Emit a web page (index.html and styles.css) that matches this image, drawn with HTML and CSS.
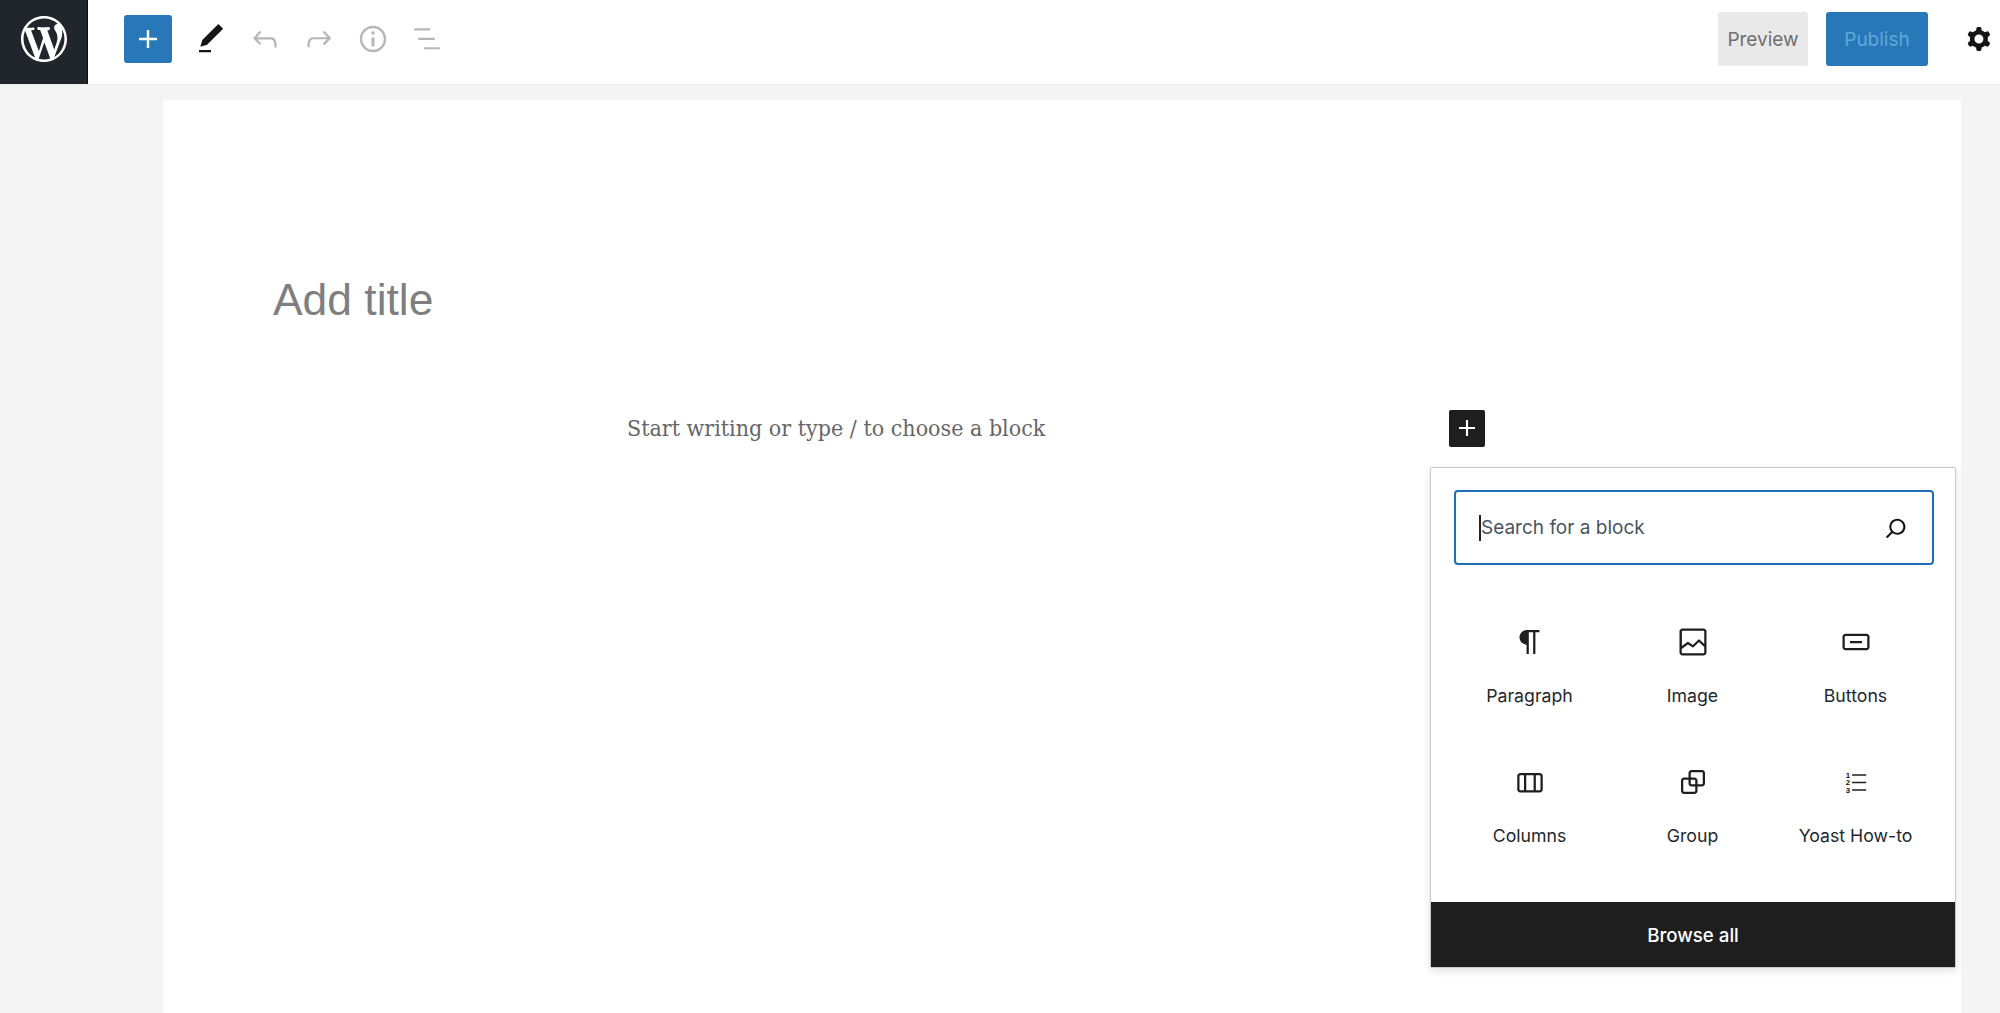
FILE: index.html
```html
<!DOCTYPE html>
<html lang="en">
<head>
<meta charset="utf-8">
<title>Add title</title>
<link rel="stylesheet" href="styles.css">
</head>
<body>
<header class="topbar">
  <div class="logo">
    <svg class="logo-svg" viewBox="0 0 20 20"><path d="M20 10c0-5.51-4.49-10-10-10C4.48 0 0 4.49 0 10c0 5.52 4.48 10 10 10 5.51 0 10-4.48 10-10zM7.78 15.37L4.37 6.22c.55-.02 1.17-.08 1.17-.08.5-.06.44-1.13-.06-1.11 0 0-1.45.11-2.37.11-.18 0-.37 0-.58-.01C4.12 2.69 6.87 1.11 10 1.11c2.33 0 4.45.87 6.05 2.34-.68-.11-1.65.39-1.65 1.58 0 .74.45 1.36.9 2.1.35.61.55 1.36.55 2.46 0 1.49-1.4 5-1.4 5l-3.03-8.37c.54-.02.82-.17.82-.17.5-.05.44-1.25-.06-1.22 0 0-1.44.12-2.38.12-.87 0-2.33-.12-2.33-.12-.5-.03-.56 1.2-.06 1.22l.92.08 1.26 3.41zM17.41 10c.24-.64.74-1.87.43-4.25.7 1.29 1.05 2.71 1.05 4.25 0 3.29-1.73 6.24-4.4 7.78.97-2.59 1.94-5.2 2.92-7.78zM6.1 18.09C3.12 16.65 1.11 13.53 1.11 10c0-1.3.23-2.48.72-3.59C3.25 10.3 4.67 14.2 6.1 18.09zm4.03-6.63l2.58 6.98c-.86.29-1.76.45-2.71.45-.79 0-1.57-.11-2.29-.33.81-2.38 1.62-4.74 2.42-7.1z"/></svg>
  </div>
  <div class="tools">
    <div class="add-btn"><svg class="icon" viewBox="0 0 24 24"><path d="M18 11.2h-5.2V6h-1.6v5.2H6v1.6h5.2V18h1.6v-5.2H18z"/></svg></div>
    <svg class="icon dark" viewBox="0 0 24 24"><path d="M20.1 5.1L16.9 2 6.2 12.7l-1.3 4.4 4.5-1.3L20.1 5.1zM4 20.8h8v-1.5H4v1.5z"/></svg>
    <svg class="icon muted" viewBox="0 0 24 24"><path d="M18.3 11.7c-.6-.6-1.4-.9-2.3-.9H6.7l2.9-3.3-1.1-1-4.5 5L8.5 16l1-1-2.7-2.7H16c.5 0 .9.2 1.3.5 1 1 1 3.4 1 4.5v.3h1.5v-.2c0-1.5 0-4.3-1.5-5.7z"/></svg>
    <svg class="icon muted" viewBox="0 0 24 24"><path d="M15.6 6.5l-1.1 1 2.9 3.3H8c-.9 0-1.7.3-2.3.9-1.4 1.5-1.4 4.2-1.4 5.6v.2h1.5v-.3c0-1.1 0-3.5 1-4.5.3-.3.7-.5 1.3-.5h9.2L14.5 15l1.1 1.1 4.6-4.6-4.6-5z"/></svg>
    <svg class="icon muted" viewBox="0 0 24 24"><path d="M12 3.2c-4.8 0-8.8 3.9-8.8 8.8 0 4.8 3.9 8.8 8.8 8.8 4.8 0 8.8-3.9 8.8-8.8 0-4.8-4-8.8-8.8-8.8zm0 16c-4 0-7.2-3.3-7.2-7.2C4.8 8 8 4.8 12 4.8s7.2 3.3 7.2 7.2c0 4-3.2 7.2-7.2 7.2zM11 17h2v-6h-2v6zm0-8h2V7h-2v2z"/></svg>
    <svg class="icon muted" viewBox="0 0 24 24"><path d="M3.5 4.9h10.7v1.4H3.5zM6.2 11.2h11v1.4h-11zM10 17.5h10.5v1.4H10z"/></svg>
  </div>
  <div class="actions">
    <div class="btn preview">Preview</div>
    <div class="btn publish">Publish</div>
    <svg class="icon dark gear" viewBox="0 0 24 24"><path fill-rule="evenodd" d="M10.289 4.836A1 1 0 0111.275 4h1.306a1 1 0 01.987.836l.244 1.466c.787.26 1.503.679 2.108 1.218l1.393-.522a1 1 0 011.216.437l.653 1.13a1 1 0 01-.23 1.273l-1.148.944a6.025 6.025 0 010 2.435l1.149.946a1 1 0 01.23 1.272l-.653 1.13a1 1 0 01-1.216.437l-1.394-.522c-.605.54-1.32.958-2.108 1.218l-.244 1.466a1 1 0 01-.987.836h-1.306a1 1 0 01-.986-.836l-.244-1.466a5.995 5.995 0 01-2.108-1.218l-1.394.522a1 1 0 01-1.217-.436l-.653-1.131a1 1 0 01.23-1.272l1.149-.946a6.026 6.026 0 010-2.435l-1.148-.944a1 1 0 01-.23-1.272l.653-1.131a1 1 0 011.217-.437l1.393.522a5.994 5.994 0 012.108-1.218l.244-1.466zM14.929 12a3 3 0 11-6 0 3 3 0 016 0z"/></svg>
  </div>
</header>
<main class="workspace">
  <section class="canvas">
    <h1 class="title">Add title</h1>
    <div class="block-row">
      <p class="placeholder">Start writing or type / to choose a block</p>
      <div class="small-add"><svg class="small-add-icon" viewBox="0 0 24 24"><path d="M18 11.2h-5.2V6h-1.6v5.2H6v1.6h5.2V18h1.6v-5.2H18z"/></svg></div>
    </div>
    <div class="popover">
      <div class="search">
        <span class="search-text">Search for a block</span>
        <svg class="search-icon" viewBox="0 0 24 24"><path d="M13 5c-3.3 0-6 2.7-6 6 0 1.4.5 2.7 1.3 3.7l-3.8 3.8 1.1 1.1 3.8-3.8c1 .8 2.3 1.3 3.7 1.3 3.3 0 6-2.7 6-6S16.3 5 13 5zm0 10.5c-2.5 0-4.5-2-4.5-4.5s2-4.5 4.5-4.5 4.5 2 4.5 4.5-2 4.5-4.5 4.5z"/></svg>
      </div>
      <div class="blocks">
        <div class="block"><svg class="icon" viewBox="0 0 24 24"><path d="M18.3 4H9.9v-.1l-.9.2c-2.3.4-4 2.4-4 4.8s1.7 4.4 4 4.8l.7.1V20h1.5V5.5h2.9V20h1.5V5.5h2.7V4z"/></svg><span>Paragraph</span></div>
        <div class="block"><svg class="icon" viewBox="0 0 24 24"><path d="M19 3H5c-1.1 0-2 .9-2 2v14c0 1.1.9 2 2 2h14c1.1 0 2-.9 2-2V5c0-1.1-.9-2-2-2zM5 4.500h14c.3 0 .5.2.5.5v8.400l-3-2.900c-.3-.3-.8-.3-1 0L11.900 14 9 12c-.3-.2-.6-.2-.8 0l-3.600 2.600V5c-.1-.3.1-.5.4-.5zm14 15H5c-.3 0-.5-.2-.5-.5v-2.400l4.100-3 3 1.900c.3.2.7.2.9-.1L16 12l3.500 3.400V19c0 .3-.2.5-.5.5z"/></svg><span>Image</span></div>
        <div class="block"><svg class="icon" viewBox="0 0 24 24"><path d="M19 6.500H5c-1.100 0-2 .9-2 2v7c0 1.100.9 2 2 2h14c1.100 0 2-.9 2-2v-7c0-1.100-.9-2-2-2zm.5 9c0 .3-.2.5-.5.5H5c-.3 0-.5-.2-.5-.5v-7c0-.3.2-.5.5-.5h14c.3 0 .5.2.5.5v7zM8 12.800h8v-1.500H8v1.500z"/></svg><span>Buttons</span></div>
        <div class="block"><svg class="icon" viewBox="0 0 24 24"><path d="M18.500 6H5.500c-1.100 0-2 .9-2 2v9c0 1.100.9 2 2 2h13c1.100 0 2-.9 2-2V8c0-1.100-.9-2-2-2zm-4.100 1.500v10H9.500v-10h4.900zM5 17V8c0-.3.2-.5.5-.5H8v10H5.500c-.3 0-.5-.2-.5-.5zm14 0c0 .3-.2.5-.5.5h-2.600v-10h2.600c.3 0 .5.2.5.5v9z"/></svg><span>Columns</span></div>
        <div class="block"><svg class="icon" viewBox="0 0 24 24"><path d="M18 4h-7c-1.100 0-2 .9-2 2v3H6c-1.100 0-2 .9-2 2v7c0 1.100.9 2 2 2h7c1.100 0 2-.9 2-2v-3h3c1.100 0 2-.9 2-2V6c0-1.100-.9-2-2-2zm-4.500 14c0 .3-.2.5-.5.5H6c-.3 0-.5-.2-.5-.5v-7c0-.3.2-.5.5-.5h3V13c0 1.100.9 2 2 2h2.500v3zm0-4.500H11c-.3 0-.5-.2-.5-.5v-2.500H13c.3 0 .5.2.5.5v2.500zm5-.5c0 .3-.2.5-.5.5h-3V11c0-1.100-.9-2-2-2h-2.500V6c0-.3.2-.5.5-.5h7c.3 0 .5.2.5.5v7z"/></svg><span>Group</span></div>
        <div class="block"><svg class="icon" viewBox="0 0 24 24"><text class="num" x="5.200" y="9.200">1</text><text class="num" x="5.200" y="14.300">2</text><text class="num" x="5.200" y="19.200">3</text><path d="M9.400 6.900h9.400v1h-9.400zM9.400 11.900h9.400v1h-9.400zM9.400 16.800h9.400v1h-9.400z"/></svg><span>Yoast How-to</span></div>
      </div>
      <div class="browse">Browse all</div>
    </div>
  </section>
</main>
</body>
</html>
```

FILE: styles.css
```css
* { box-sizing: border-box; }
html, body { margin: 0; height: 100%; }
body {
  display: flex;
  flex-direction: column;
  height: 100vh;
  overflow: hidden;
  background: #f4f4f4;
  font-family: Inter, "Liberation Sans", sans-serif;
  color: #1e1e1e;
}
.topbar {
  display: flex;
  align-items: center;
  height: 85px;
  flex: none;
  padding: 0 3px 7px 0;
  background: #fff;
  border-bottom: 1px solid #ececec;
}
.logo {
  display: flex;
  align-items: center;
  justify-content: center;
  width: 88px;
  height: 84px;
  margin-bottom: -7px;
  padding-bottom: 6px;
  background: #20262c;
  border-right: 1px solid #0c0e10;
}
.logo-svg { width: 46px; height: 46px; fill: #fff; }
.tools {
  display: flex;
  align-items: center;
  gap: 18px;
  margin-left: 36px;
}
.icon { display: block; width: 36px; height: 36px; fill: #1e1e1e; flex: none; }
.icon.dark { fill: #151515; }
.icon.muted { fill: #b6b6b6; }
.add-btn {
  display: flex;
  align-items: center;
  justify-content: center;
  width: 48px;
  height: 48px;
  margin-right: 3px;
  background: #2878b9;
  border-radius: 3px;
}
.add-btn .icon { fill: #fff; }
.actions {
  display: flex;
  align-items: center;
  margin-left: auto;
}
.btn {
  display: flex;
  align-items: center;
  justify-content: center;
  height: 54px;
  padding-top: 2px;
  font-size: 19px;
  border-radius: 3px;
}
.preview {
  width: 90px;
  background: #e9e9e9;
  color: #6f6f6f;
  margin-right: 18px;
}
.publish {
  width: 102px;
  background: #2878b9;
  color: #60a8d8;
  margin-right: 33px;
}
.workspace {
  flex: 1;
  min-height: 0;
  padding: 15px 39px 0 163px;
}
.canvas {
  position: relative;
  height: 100%;
  padding-top: 170px;
  background: #fff;
}
.title {
  margin: 0 0 78px 110px;
  font-family: "Liberation Sans", Arial, sans-serif;
  font-size: 44.4px;
  line-height: 60px;
  font-weight: 400;
  color: #7f7f7f;
}
.block-row {
  display: flex;
  align-items: center;
  justify-content: space-between;
  width: 858px;
  margin-left: 464px;
}
.placeholder {
  margin: 0;
  font-family: "DejaVu Serif Condensed", "DejaVu Serif", serif;
  font-size: 23px;
  line-height: 40px;
  color: #666;
}
.small-add {
  display: flex;
  align-items: center;
  justify-content: center;
  width: 36px;
  height: 37px;
  background: #1e1e1e;
  border-radius: 2px;
}
.small-add-icon { display: block; width: 32px; height: 32px; fill: #fff; }
.popover {
  position: absolute;
  top: 367px;
  right: 5px;
  display: flex;
  flex-direction: column;
  width: 526px;
  height: 501px;
  background: #fff;
  border: 1px solid #c9c9c9;
  border-radius: 2px;
  box-shadow: 0 3px 8px rgba(0, 0, 0, 0.12);
}
.search {
  display: flex;
  flex: none;
  align-items: center;
  justify-content: space-between;
  height: 75px;
  margin: 22px 21px 0 23px;
  padding: 0 20px 0 23px;
  border: 2px solid #1e6fb8;
  border-radius: 4px;
}
.search-text {
  border-left: 2px solid #222;
  font-size: 19px;
  line-height: 26px;
  color: #4a5460;
}
.search-icon { display: block; width: 32px; height: 32px; fill: #111; }
.blocks {
  display: grid;
  grid-template-columns: repeat(3, 163px);
  grid-auto-rows: 84px;
  row-gap: 56px;
  flex: none;
  margin: 59px 0 0 17px;
}
.block {
  display: flex;
  flex-direction: column;
  align-items: center;
  font-size: 17.7px;
  line-height: 24px;
  color: #23282d;
}
.block .icon { margin-bottom: 24px; }
.num { font-family: "Liberation Sans", sans-serif; font-size: 5.2px; font-weight: 700; fill: #111; }
.browse {
  display: flex;
  flex: none;
  align-items: center;
  justify-content: center;
  height: 65px;
  margin-top: auto;
  padding-top: 2px;
  background: #1e1e1e;
  color: #fff;
  font-size: 18.7px;
  font-weight: 500;
}
```
